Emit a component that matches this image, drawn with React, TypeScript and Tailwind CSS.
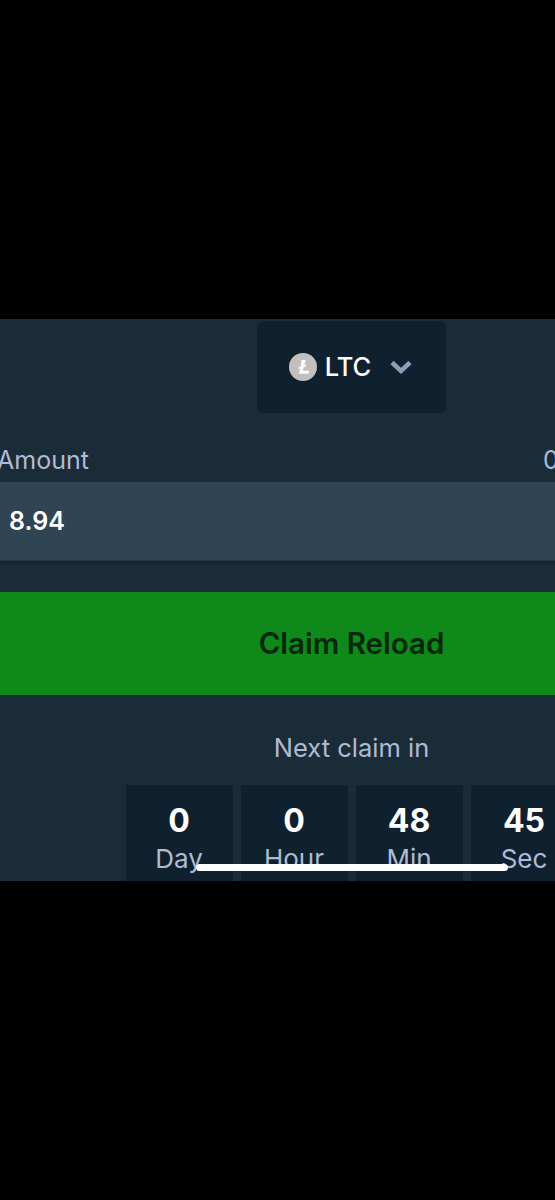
import React from 'react';

const units = [
  { value: '0', label: 'Day' },
  { value: '0', label: 'Hour' },
  { value: '48', label: 'Min' },
  { value: '45', label: 'Sec' },
];

function LtcIcon() {
  return (
    <svg viewBox="0 0 28 28" className="w-[28px] h-[28px]">
      <circle cx="14" cy="14" r="14" fill="#c3bfbd" />
      <path d="M12.6 7h4l-1.3 5.2 2.2-.8-.5 1.9-2.2.8-.9 3.6h6.4l-.8 3H9.9l1.3-5.3-1.9.7.5-1.8 1.9-.7z" fill="#ffffff" />
    </svg>
  );
}

export default function App() {
  return (
    <div className="relative h-[1200px] w-[555px] overflow-hidden bg-black font-['Inter','Open_Sans',sans-serif]">
      <div className="h-[319px]" />
      <div className="h-[562px] overflow-hidden bg-[#1a2c38]">
        <div className="-ml-3 flex w-[727px] flex-col">
          {/* Currency select */}
          <div className="mt-[2px] flex justify-center">
            <div className="flex h-[92px] w-[189px] items-center justify-center rounded-md bg-[#0f212e] pr-[1px]">
              <LtcIcon />
              <span className="ml-[8px] pt-[1px] text-[25.5px] font-medium text-white">LTC</span>
              <svg viewBox="0 0 24 24" className="ml-[18px] h-[24px] w-[24px]" fill="none" stroke="#8f9db8" strokeWidth="4.5">
                <path d="M3 7.5 12 16l9-8.5" />
              </svg>
            </div>
          </div>

          {/* Amount */}
          <div className="mt-[29px] flex h-[38px] items-center justify-between text-[25px] text-[#b1bad3]">
            <span className="pl-[9px]">Amount</span>
            <span className="w-[172px] whitespace-nowrap">0.00000000</span>
          </div>
          <div className="mt-[2px] flex h-[79px] items-center border-b-[1px] border-[#223542] bg-[#2f4553] pl-[21px] pt-[2px] text-[25px] font-semibold text-white shadow-[0_2px_3px_rgba(0,0,0,0.2)]">
            8.94
          </div>

          {/* Claim button */}
          <div className="mt-[31px] flex h-[103px] items-center justify-center bg-[#0f8a1a] text-[29.5px] font-semibold text-[#06270c]">
            Claim Reload
          </div>

          <div className="mt-[38px] text-center text-[25.5px] leading-[30px] text-[#b1bad3]">Next claim in</div>

          {/* Countdown */}
          <div className="mt-[22px] flex justify-center gap-[8px]">
            {units.map((unit) => (
              <div key={unit.label} className="flex h-[110px] w-[107px] flex-col items-center bg-[#0f212e] pt-[16px]">
                <span className="text-[32px] font-bold leading-[40px] text-white">{unit.value}</span>
                <span className="mt-[2px] text-[26px] leading-[32px] text-[#b1bad3]">{unit.label}</span>
              </div>
            ))}
          </div>
        </div>
      </div>

      {/* Home indicator */}
      <div className="absolute left-[196px] top-[864px] h-[7px] w-[312px] rounded-full bg-white" />
    </div>
  );
}
